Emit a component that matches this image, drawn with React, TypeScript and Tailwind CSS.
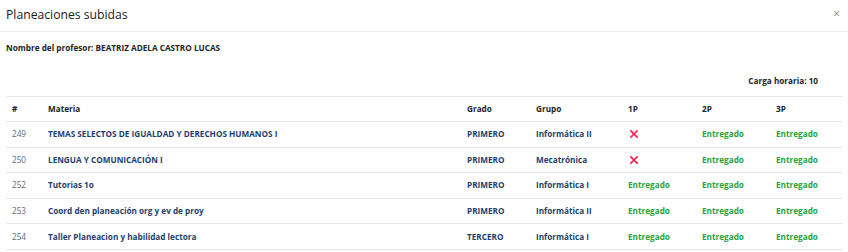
import React from "react";

type Row = {
  id: number;
  materia: string;
  grado: string;
  grupo: string;
  p1: boolean;
  p2: boolean;
  p3: boolean;
};

const rows: Row[] = [
  { id: 249, materia: "TEMAS SELECTOS DE IGUALDAD Y DERECHOS HUMANOS I", grado: "PRIMERO", grupo: "Informática II", p1: false, p2: true, p3: true },
  { id: 250, materia: "LENGUA Y COMUNICACIÓN I", grado: "PRIMERO", grupo: "Mecatrónica", p1: false, p2: true, p3: true },
  { id: 252, materia: "Tutorias 1o", grado: "PRIMERO", grupo: "Informática I", p1: true, p2: true, p3: true },
  { id: 253, materia: "Coord den planeación org y ev de proy", grado: "PRIMERO", grupo: "Informática II", p1: true, p2: true, p3: true },
  { id: 254, materia: "Taller Planeacion y habilidad lectora", grado: "TERCERO", grupo: "Informática I", p1: true, p2: true, p3: true },
];

const Status = ({ ok }: { ok: boolean }) =>
  ok ? (
    <span className="font-bold text-[#22a543]">Entregado</span>
  ) : (
    <svg className="ml-[2px] h-[8px] w-[8px]" viewBox="0 0 8 8">
      <path d="M0.9 0.9l6.2 6.2M7.1 0.9l-6.2 6.2" stroke="#f2284f" strokeWidth={1.7} strokeLinecap="square" />
    </svg>
  );

export default function App() {
  return (
    <div className="h-[252px] w-[848px] overflow-hidden bg-white text-[#212529]" style={{ fontFamily: '"Open Sans", "Noto Sans", sans-serif' }}>
      {/* Header */}
      <div className="flex h-[32px] items-center justify-between border-b border-[#ececec] pl-[6px] pr-[8px]">
        <h2 className="text-[12.2px] leading-none text-[#1a1a1a]">Planeaciones subidas</h2>
        <button className="mb-[4px] text-[12px] leading-none text-[#888]">×</button>
      </div>

      <div className="px-[6px]">
        <p className="mt-[10px] text-[8.2px] font-bold leading-[11px]">
          Nombre del profesor: BEATRIZ ADELA CASTRO LUCAS
        </p>
        <p className="mt-[22px] pr-[24px] text-right text-[8.2px] font-bold leading-[11px]">Carga horaria: 10</p>

        <table className="mt-[10px] w-[837px] table-fixed border-collapse text-[8.2px]">
          <colgroup>
            <col className="w-[36px]" />
            <col className="w-[419px]" />
            <col className="w-[69px]" />
            <col className="w-[92px]" />
            <col className="w-[74px]" />
            <col className="w-[74px]" />
            <col className="w-[73px]" />
          </colgroup>
          <thead>
            <tr className="h-[25px] border-y border-[#e8e8e8] text-left font-bold">
              <th className="pl-[6px]">#</th>
              <th className="pl-[6px]">Materia</th>
              <th className="pl-[6px]">Grado</th>
              <th className="pl-[6px]">Grupo</th>
              <th className="pl-[6px]">1P</th>
              <th className="pl-[6px]">2P</th>
              <th className="pl-[6px]">3P</th>
            </tr>
          </thead>
          <tbody>
            {rows.map((r) => (
              <tr key={r.id} className="h-[25.6px] border-b border-[#e8e8e8]">
                <td className="pl-[6px] text-[#666]">{r.id}</td>
                <td className="pl-[6px] font-bold text-[#1d3f6e]">{r.materia}</td>
                <td className="pl-[6px] font-bold text-[#1d3f6e]">{r.grado}</td>
                <td className="pl-[6px] font-bold text-[#1d3f6e]">{r.grupo}</td>
                <td className="pl-[6px]"><Status ok={r.p1} /></td>
                <td className="pl-[6px]"><Status ok={r.p2} /></td>
                <td className="pl-[6px]"><Status ok={r.p3} /></td>
              </tr>
            ))}
          </tbody>
        </table>
      </div>
    </div>
  );
}
